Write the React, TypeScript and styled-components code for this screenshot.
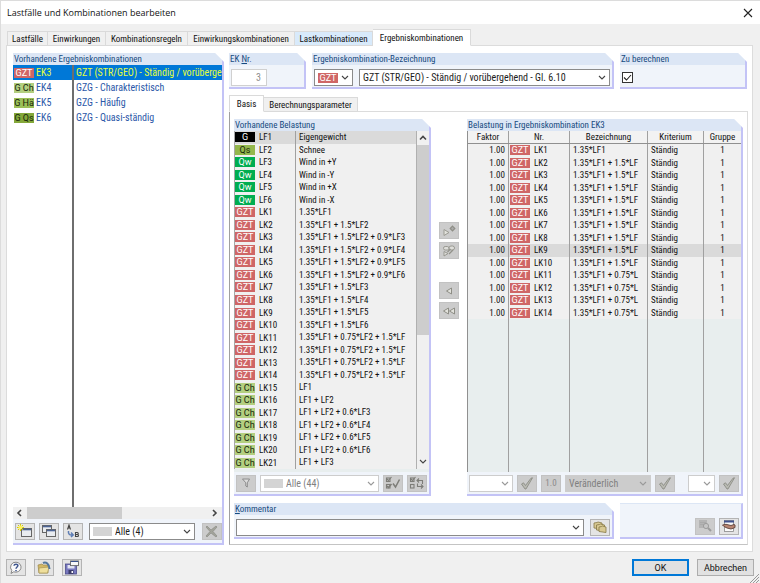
import React from "react";
import styled, { createGlobalStyle, css } from "styled-components";

const Global = createGlobalStyle`
  *, *::before, *::after { box-sizing: border-box; }
  body { margin: 0; background: #f0f0f0; color: #111; }
  body, button, input, select, table {
    font-family: "Roboto Condensed", "Open Sans", sans-serif;
    font-size: 9px;
    line-height: 12px;
  }
  button, input, select { margin: 0; padding: 0; color: inherit; border-radius: 0; }
  table { border-spacing: 0; }
  th, td { padding: 0; font-weight: 400; text-align: left; white-space: nowrap; overflow: hidden; }
  u { text-decoration: underline; text-underline-offset: 1px; }
`;

/* ---------- window frame ---------- */

const Dialog = styled.main`
  display: flex;
  flex-direction: column;
  min-height: 100vh;
  background: #f0f0f0;
  border: 1px solid #dcdcdc;
  border-right: 0;
  border-bottom: 0;
`;
const TitleBar = styled.header`
  display: flex;
  align-items: center;
  justify-content: space-between;
  height: 23px;
  padding: 0 6px;
  background: #fff;
`;
const Title = styled.h1`
  margin: 0;
  font: 400 9px/14px "Open Sans", sans-serif;
  color: #111;
`;
const CloseButton = styled.button`
  display: flex;
  width: 12px;
  height: 12px;
  align-items: center;
  justify-content: center;
  border: 0;
  background: none;
`;
const TabBar = styled.nav`
  display: flex;
  align-items: flex-end;
  position: relative;
  z-index: 1;
  padding: 5px 6px 0;
  margin-bottom: -1px;
`;
const Tab = styled.button<{ $w: number; $on?: boolean; $hot?: boolean }>`
  width: ${p => p.$w}px;
  height: 15px;
  border: 1px solid #dadada;
  border-left-width: 0;
  background: ${p => (p.$hot ? "#d8eafb" : "#f0f0f0")};
  white-space: nowrap;
  line-height: 12px;
  &:first-child { border-left-width: 1px; }
  ${p => p.$on && css`
    height: 17px;
    background: #fff;
    border-bottom-color: #fff;
    line-height: 12px;
  `}
`;
const Page = styled.section`
  flex: 1;
  display: flex;
  gap: 5px;
  margin: 0 7px 0 5px;
  padding: 7px 4px 6px 6px;
  background: #fff;
  border: 1px solid #dcdcdc;
`;
const Footer = styled.footer`
  display: flex;
  align-items: center;
  gap: 8px;
  height: 31px;
  padding: 0 6px 0 5px;
  position: relative;
`;
const Spacer = styled.div`
  flex: 1;
`;
const Grip = styled.svg`
  position: absolute;
  right: 1px;
  bottom: 0;
`;
const PushButton = styled.button<{ $primary?: boolean }>`
  width: 57px;
  height: 17px;
  font: 400 9px/12px Roboto, sans-serif;
  background: #e1e1e1;
  border: ${p => (p.$primary ? "2px solid #0078d7" : "1px solid #adadad")};
`;

/* ---------- groups ---------- */

const Group = styled.section<{ $w?: number }>`
  display: flex;
  flex-direction: column;
  min-width: 0;
  ${p => (p.$w ? `width: ${p.$w}px; flex: none;` : "flex: 1;")}
  background: #f0f4fa;
  border: solid #c3c3f6;
  border-width: 0 2px 2px 0;
  clip-path: polygon(0 0, calc(100% - 9px) 0, 100% 9px, 100% 100%, 0 100%);
`;
const GroupTitle = styled.h2`
  flex: none;
  margin: 0;
  height: 12px;
  padding-left: 1px;
  font: inherit;
  white-space: nowrap;
  color: #164a80;
  background: #dce6f5;
`;
const Field = styled.div`
  display: flex;
  align-items: center;
  gap: 6px;
  height: 22px;
  padding: 2px 2px 0;
`;
const Tools = styled.div<{ $h?: number }>`
  flex: none;
  display: flex;
  align-items: center;
  gap: 4px;
  height: ${p => p.$h ?? 22}px;
  padding: 0 2px;
`;
const PlainGroup = styled(Group)`
  clip-path: none;
  justify-content: flex-end;
  border-top: 1px solid #dce6f5;
`;

/* ---------- controls ---------- */

const ToolButton = styled.button<{ $solid?: boolean }>`
  flex: none;
  display: flex;
  align-items: center;
  justify-content: center;
  width: 20px;
  height: 17px;
  color: #8a8a8a;
  background: ${p => (p.$solid ? "#cccccc" : "#e4e4e4")};
  border: 1px solid ${p => (p.$solid ? "#c2c2c2" : "#b4b4b4")};
`;
const NumberBox = styled.input`
  width: 36px;
  height: 17px;
  padding: 0 5px;
  font-size: 10px;
  text-align: right;
  color: #8e8e8e;
  background: #fff;
  border: 1px solid #d0d0d0;
`;
const Combo = styled.div<{ $w?: number; $off?: boolean; $fill?: boolean }>`
  ${p => (p.$w ? `width: ${p.$w}px; flex: none;` : "flex: 1;")}
  display: flex;
  align-items: center;
  position: relative;
  min-width: 0;
  height: 17px;
  background: ${p => (p.$fill ? "#cccccc" : "#fff")};
  border: 1px solid ${p => (p.$off ? "#cdcdcd" : "#8b8b8b")};
  color: ${p => (p.$off ? "#808080" : "#1c1c1c")};
  > svg { position: absolute; right: 3px; top: 4px; pointer-events: none; }
`;
const Select = styled.select<{ $indent?: number }>`
  appearance: none;
  flex: 1;
  min-width: 0;
  height: 15px;
  padding: 0 14px 0 ${p => p.$indent ?? 3}px;
  border: 0;
  background: transparent;
  font-size: 10px;
  line-height: 15px;
  opacity: 1;
`;
const Swatch = styled.span`
  flex: none;
  width: 19px;
  height: 9px;
  margin-left: 3px;
  background: #d4d4d4;
`;
const Check = styled.input`
  appearance: none;
  margin: 0;
  width: 11px;
  height: 11px;
  border: 1px solid #333;
  background: #fff;
`;
const CheckLabel = styled.label`
  display: grid;
  > * { grid-area: 1 / 1; }
  > svg { pointer-events: none; z-index: 1; visibility: hidden; }
  > input:checked + svg { visibility: visible; }
`;
const tones = {
  gzt: ["#cf6666", "#ffffff"],
  gch: ["#b3cf80", "#16260a"],
  gha: ["#9cbf58", "#16260a"],
  gqs: ["#84a83a", "#16260a"],
  g: ["#000000", "#ffffff"],
  qs: ["#94b74c", "#16260a"],
  qw: ["#00ad50", "#ffffff"],
};
type Tone = keyof typeof tones;
const Badge = styled.span<{ $tone: Tone }>`
  flex: none;
  display: flex;
  align-items: center;
  justify-content: center;
  width: 20px;
  height: 10px;
  overflow: hidden;
  font: 400 9px/10px Roboto, sans-serif;
  white-space: nowrap;
  background: ${p => tones[p.$tone][0]};
  color: ${p => tones[p.$tone][1]};
`;
const TypeBadge = styled(Badge)`
  position: absolute;
  left: 3px;
  top: 3px;
  pointer-events: none;
`;

/* ---------- tables ---------- */

const Table = styled.table`
  flex: 1;
  display: flex;
  flex-direction: column;
  min-width: 0;
  background: #f0f0f0;
`;
const Tagged = styled.td`
  display: flex;
  align-items: center;
  gap: 4px;
`;

const ComboTable = styled(Table)`
  background: #fff;
  color: #2c58a8;
  font-size: 10px;
  tbody { flex: 1; display: flex; flex-direction: column; }
`;
const ComboRow = styled.tr<{ $on?: boolean; $fill?: boolean }>`
  display: grid;
  grid-template-columns: 59px 1fr;
  ${p => (p.$fill ? "flex: 1;" : "height: 15px;")}
  line-height: 15px;
  ${p => p.$on && "background: #0078d7; color: #e6ff3c;"}
  td { padding-left: 1px; }
  td + td { border-left: 2px solid #6e6e6e; padding-left: 2px; }
  ${Tagged} { gap: 2px; }
`;

const LoadTable = styled(Table)`
  border-left: 1px solid #a8a8a8;
  tbody { flex: 1; display: grid; grid-auto-rows: 1fr; }
`;
const LoadRow = styled.tr<{ $on?: boolean }>`
  display: grid;
  grid-template-columns: 60px 1fr;
  align-items: stretch;
  background: ${p => (p.$on ? "#dadada" : "transparent")};
  td + td { border-left: 1px solid #a0a0a0; padding-left: 3px; }
`;

const ResultTable = styled(Table)`
  border-left: 1px solid #909090;
  thead { flex: none; border-bottom: 1px solid #909090; background: #f2f2f2; }
  tbody { flex: none; display: grid; grid-auto-rows: 1fr; height: 175px; }
  tfoot { flex: 1; display: grid; background: #e8eeee; }
`;
const ResultRow = styled.tr<{ $on?: boolean }>`
  display: grid;
  grid-template-columns: 41px 61px 78px 56px 1fr;
  background: ${p => (p.$on ? "#dadada" : "transparent")};
  th { text-align: center; line-height: 12px; }
  th:not(:last-child), td:not(:last-child) { border-right: 1px solid #a0a0a0; }
  td { padding: 0 3px; }
  td:first-child { text-align: right; }
  td:last-child { text-align: center; }
  ${Tagged} { padding: 0 1px; }
`;

const ListBody = styled.div`
  flex: 1;
  display: flex;
  min-height: 0;
`;
const VScroll = styled.div`
  width: 13px;
  display: flex;
  flex-direction: column;
  align-items: center;
  justify-content: space-between;
  border-left: 1px solid #b0b0b0;
  background: #f0f0f0;
  svg { flex: none; margin: 3px 0; }
`;
const VThumb = styled.div`
  flex: 191;
  align-self: stretch;
  background: #cdcdcd;
`;
const VRest = styled.div`
  flex: 121;
`;
const HScroll = styled.div`
  display: flex;
  align-items: center;
  height: 12px;
  padding: 0 4px 0 3px;
  background: #f0f0f0;
`;
const HThumb = styled.div`
  flex: 96;
  height: 12px;
  margin-left: 3px;
  background: #cdcdcd;
`;
const HRest = styled.div`
  flex: 88;
`;
const Strip = styled.div`
  height: 3px;
  background: #e8eeee;
`;

/* ---------- right side layout ---------- */

const Main = styled.div`
  flex: 1;
  display: flex;
  flex-direction: column;
  min-width: 0;
`;
const Row = styled.div<{ $grow?: boolean; $pad?: boolean }>`
  display: flex;
  gap: 6px;
  ${p => p.$grow && "flex: 1; gap: 0;"}
  ${p => p.$pad && "padding-right: 1px;"}
`;
const SubTabs = styled.nav`
  display: flex;
  align-items: flex-end;
  position: relative;
  z-index: 1;
  margin: 6px 0 -1px;
`;
const SubPage = styled.section`
  flex: 1;
  display: flex;
  flex-direction: column;
  gap: 7px;
  padding: 7px 4px 5px 4px;
  border: 1px solid #dcdcdc;
  border-left-color: #a0a0a0;
  border-bottom-color: #c4c4c4;
`;
const Transfer = styled.div`
  display: flex;
  flex-direction: column;
  gap: 3px;
  padding: 103px 8px 0;
  ${ToolButton}:nth-child(3) { margin-top: 20px; }
`;

/* ---------- drawings ---------- */

const Chevron = ({ dir = "down", c = "#444" }: { dir?: "down" | "up" | "left" | "right"; c?: string }) => {
  const d = { down: "M1 2l3 3 3-3", up: "M1 5.500l3-3 3 3", left: "M5 1L2 4l3 3", right: "M3 1l3 3-3 3" }[dir];
  return <svg width="8" height="8" viewBox="0 0 8 8"><path d={d} fill="none" stroke={c} strokeWidth={dir === "down" ? 1.1 : 1.6} /></svg>;
};
const TickIcon = () => (
  <svg width="14" height="13" viewBox="0 0 14 13"><path d="M1.500 7l2-1.200L5.500 8.500 11 1.200l1.500-.4L6 12H5z" fill="#b9bab2" stroke="#85877f" strokeWidth=".8" /></svg>
);
const NewIcon = () => (
  <svg width="16" height="14" viewBox="0 0 16 14">
    <rect x="4.500" y="4.500" width="10" height="8" fill="#e9ecef" stroke="#666" /><path d="M5 5.500h9" stroke="#4d6596" strokeWidth="1.600" />
    <path d="M3.500 0v7M0 3.500h7M1 1l5 5M6 1L1 6" stroke="#d6cf00" strokeWidth="1" /><circle cx="3.500" cy="3.500" r="2" fill="#fff35a" />
  </svg>
);
const CopyIcon = () => (
  <svg width="16" height="14" viewBox="0 0 16 14">
    <rect x="1.500" y="1.500" width="9" height="7" fill="#e9ecef" stroke="#666" /><path d="M2 2.500h8" stroke="#4d6596" strokeWidth="1.600" />
    <rect x="5.500" y="5.500" width="9" height="7" fill="#e9ecef" stroke="#666" /><path d="M6 6.500h8" stroke="#4d6596" strokeWidth="1.600" />
  </svg>
);
const RenumberIcon = () => (
  <svg width="16" height="14" viewBox="0 0 16 14" fill="none">
    <path d="M2.500 5.500l1.500-4.500 1.500 4.500M3 4h2" stroke="#444" strokeWidth="1.100" />
    <path d="M3.500 7c-.5 3 1 4.500 4 4M6 8.500l2.200 2.500-2.200 2" stroke="#5d7db5" strokeWidth="1.500" />
    <path d="M10.500 8.500v4h2c1.300 0 1.300-2 0-2h-1.800 1.600c1.300 0 1.300-2 0-2z" stroke="#444" strokeWidth="1.100" />
  </svg>
);
const DeleteIcon = () => (
  <svg width="14" height="13" viewBox="0 0 14 13"><path d="M2 1l4 4 5-4 1 1-4 4.500 4 4.500-1 1-5-4-4 4-1-1L5 6.500 1 2z" fill="#a3a49b" stroke="#85867f" strokeWidth=".6" /></svg>
);
const HelpIcon = () => (
  <svg width="14" height="14" viewBox="0 0 14 14" fill="none">
    <path d="M7 1.200a5.300 5 0 1 1-2.300 9.600L2 12.500l.8-3A5 5 0 0 1 7 1.200z" fill="#fafafa" stroke="#888" />
    <path d="M5 4.800C5.200 2.600 9 2.700 8.900 4.800 8.800 6 7 6.200 7 7.800M7 9v1.300" stroke="#3f568f" strokeWidth="1.500" />
  </svg>
);
const OpenIcon = () => (
  <svg width="16" height="14" viewBox="0 0 16 14">
    <path d="M2 4l4-1 1 1h5v8H3z" fill="#d2b763" stroke="#9b8748" strokeWidth=".7" />
    <path d="M3 7l10-1-1.500 6H3z" fill="#efdf9c" stroke="#a99655" strokeWidth=".7" />
    <path d="M7 2C10 .5 13.500 3 13.500 8" fill="none" stroke="#54779c" strokeWidth="2" />
  </svg>
);
const SaveIcon = () => (
  <svg width="16" height="15" viewBox="0 0 16 15">
    <rect x="1.500" y="4" width="11" height="10" fill="#7777bd" stroke="#4d4d8b" strokeWidth=".8" /><rect x="3.500" y="5" width="7" height="3.500" fill="#e2e4f3" />
    <rect x="4.500" y="10" width="5" height="4" fill="#3d3d6b" /><rect x="7.500" y="11" width="1.500" height="2" fill="#fff" />
    <rect x="6.500" y="1" width="8" height="4.600" fill="#f8f8f8" stroke="#666" strokeWidth=".9" /><path d="M7 1.500h7" stroke="#39518c" strokeWidth="1" />
  </svg>
);
const FilterIcon = () => (
  <svg width="12" height="12" viewBox="0 0 12 12"><path d="M2.500 2h7L7.300 5.800V10L5.800 9V5.800z" fill="#dcdcdc" stroke="#858585" strokeWidth=".9" /></svg>
);
const CheckPair = ({ swap }: { swap?: boolean }) => (
  <svg width="16" height="14" viewBox="0 0 16 14" fill="none" stroke="#7d7d78" strokeWidth="1.100">
    <rect x="1.500" y="2" width="3.500" height="3.500" /><rect x="1.500" y="8.500" width="3.500" height="3.500" /><path d="M2 3l1.500 1.500L6.500 1" />
    {swap ? <path d="M8 4.500h5.500V8M10 2.500l-2 2 2 2M14 10.500H8.500V7.500M12 8.500l2 2-2 2" /> : <path d="M2 10l1.500 1.500L6.500 8M8 7.500l2.500 3.500L14.500 3.500" strokeWidth="1.500" />}
  </svg>
);
const AddIcon = () => (
  <svg width="14" height="12" viewBox="0 0 14 12"><path d="M2 4.500v6L7 7.500z" fill="#e2e2dc" stroke="#9a9a92" /><path d="M10.500 1.200l2.300 2.300-2.300 2.300-2.300-2.300z" fill="#aaa" stroke="#8e8e86" strokeWidth="1.200" /></svg>
);
const AddAllIcon = () => (
  <svg width="14" height="12" viewBox="0 0 14 12">
    <g fill="#dededa" stroke="#92928a" strokeWidth=".9"><rect x="1.500" y="1.500" width="5.500" height="3.500" rx="1.700" /><rect x="7" y="1" width="5.500" height="4" rx="2" /><path d="M2 6.500v4.500l4-2.500z" /></g>
    <path d="M5.500 7l3-3M7 9l4-4" stroke="#92928a" strokeWidth="1.200" />
  </svg>
);
const BackIcon = ({ twice }: { twice?: boolean }) => (
  <svg width="14" height="10" viewBox="0 0 14 10" fill="#e2e2dc" stroke="#8e8e86">
    {twice ? <><path d="M6.500 2v6L1.500 5z" /><path d="M12.500 2v6l-5-3z" /></> : <path d="M9.500 2v6l-5-3z" />}
  </svg>
);
const LibraryIcon = () => (
  <svg width="15" height="13" viewBox="0 0 15 13" fill="#d8c993" stroke="#857744" strokeWidth=".8">
    <path d="M1 2l3-.5 1-.5 4 1v6l-8-1z" /><path d="M3.500 4l3-.5 1-.5 4 1v6l-8-1z" /><path d="M6 6l2.500-.5 1-.5 3.500 1v5.500L6 10.500z" />
  </svg>
);
const InspectIcon = () => (
  <svg width="16" height="14" viewBox="0 0 16 14"><rect x="2" y="1" width="8" height="8" fill="#b4b4b4" /><path d="M3 3.500h6M3 5.500h6" stroke="#a2a2a2" strokeWidth=".6" /><circle cx="9" cy="7" r="2.600" fill="#c6c6c6" stroke="#9c9c9c" /><path d="M11 9l3 3" stroke="#9c9c9c" strokeWidth="2" /></svg>
);
const DetailsIcon = () => (
  <svg width="16" height="14" viewBox="0 0 16 14"><rect x="3.500" y="1.500" width="9" height="11" fill="#fafafa" stroke="#888" strokeWidth=".8" /><path d="M3 2.500h10" stroke="#40518d" strokeWidth="2" /><path d="M1.500 6l3.500-.7 5 1.200 3-1 1 .5v2.500L10 10 6 9 3 7.500z" fill="#b98673" stroke="#5b4038" strokeWidth=".9" /></svg>
);

/* ---------- data ---------- */

const combos: [Tone, string, string, string][] = [
  ["gzt", "GZT", "EK3", "GZT (STR/GEO) - Ständig / vorübergehend - Gl. 6.10"],
  ["gch", "G Ch", "EK4", "GZG - Charakteristisch"],
  ["gha", "G Hä", "EK5", "GZG - Häufig"],
  ["gqs", "G Qs", "EK6", "GZG - Quasi-ständig"],
];
const cases: [Tone, string, string, string][] = [
  ["g", "G", "LF1", "Eigengewicht"],
  ["qs", "Qs", "LF2", "Schnee"],
  ["qw", "Qw", "LF3", "Wind in +Y"],
  ["qw", "Qw", "LF4", "Wind in -Y"],
  ["qw", "Qw", "LF5", "Wind in +X"],
  ["qw", "Qw", "LF6", "Wind in -X"],
];
const strength = [
  "1.35*LF1", "1.35*LF1 + 1.5*LF2",
  ...[3, 4, 5, 6].map(n => `1.35*LF1 + 1.5*LF2 + 0.9*LF${n}`),
  ...[3, 4, 5, 6].map(n => `1.35*LF1 + 1.5*LF${n}`),
  ...Array(4).fill("1.35*LF1 + 0.75*LF2 + 1.5*LF"),
];
// LK11 to LK14 are followed by the serviceability combinations from LK15 on.
const service = ["LF1", "LF1 + LF2", ...[3, 4, 5, 6].map(n => `LF1 + LF2 + 0.6*LF${n}`), "LF1 + LF3"];
const loads = [
  ...cases,
  ...strength.map((t, i): [Tone, string, string, string] => ["gzt", "GZT", `LK${i + 1}`, t]),
  ...service.map((t, i): [Tone, string, string, string] => ["gch", "G Ch", `LK${i + 15}`, t]),
];
const results = strength.map((_, i) => ({
  nr: `LK${i + 1}`,
  text: i === 0 ? "1.35*LF1" : i < 10 ? "1.35*LF1 + 1.5*LF" : "1.35*LF1 + 0.75*L",
}));

export default function App() {
  return (
    <>
      <Global />
      <Dialog>
        <TitleBar>
          <Title>Lastfälle und Kombinationen bearbeiten</Title>
          <CloseButton aria-label="Schließen">
            <svg width="10" height="10" viewBox="0 0 10 10"><path d="M1 1l8 8M9 1L1 9" stroke="#222" strokeWidth="1.100" /></svg>
          </CloseButton>
        </TitleBar>
        <TabBar>
          <Tab $w={41}>Lastfälle</Tab>
          <Tab $w={58}>Einwirkungen</Tab>
          <Tab $w={82}>Kombinationsregeln</Tab>
          <Tab $w={107}>Einwirkungskombinationen</Tab>
          <Tab $w={78} $hot>Lastkombinationen</Tab>
          <Tab $w={98} $on>Ergebniskombinationen</Tab>
        </TabBar>
        <Page>
          <Group $w={211}>
            <GroupTitle>Vorhandene Ergebniskombinationen</GroupTitle>
            <ListBody>
              <ComboTable>
                <tbody>
                  {combos.map(([tone, tag, nr, text], i) => (
                    <ComboRow key={nr} $on={i === 0}>
                      <Tagged><Badge $tone={tone}>{tag}</Badge>{nr}</Tagged>
                      <td>{text}</td>
                    </ComboRow>
                  ))}
                  <ComboRow $fill><td /><td /></ComboRow>
                </tbody>
              </ComboTable>
            </ListBody>
            <HScroll>
              <Chevron dir="left" /><HThumb /><HRest /><Chevron dir="right" />
            </HScroll>
            <Tools $h={24}>
              <ToolButton aria-label="Neu"><NewIcon /></ToolButton>
              <ToolButton aria-label="Kopieren"><CopyIcon /></ToolButton>
              <ToolButton aria-label="Umnummerieren"><RenumberIcon /></ToolButton>
              <MarginCombo $w={106}>
                <Swatch />
                <Select aria-label="Filter"><option>Alle (4)</option></Select>
                <Chevron />
              </MarginCombo>
              <ToolButton $solid aria-label="Löschen"><DeleteIcon /></ToolButton>
            </Tools>
          </Group>
          <Main>
            <Row $pad>
              <Group $w={77}>
                <GroupTitle as="label" htmlFor="nr">EK <u>N</u>r.</GroupTitle>
                <Field><NumberBox id="nr" defaultValue="3" disabled /></Field>
              </Group>
              <Group>
                <GroupTitle as="label" htmlFor="name">Ergebniskombination-Bezeichnung</GroupTitle>
                <Field>
                  <Combo $w={39}>
                    <Select aria-label="Bemessungssituation" $indent={0}><option aria-label="GZT" /></Select>
                    <TypeBadge $tone="gzt">GZT</TypeBadge>
                    <Chevron />
                  </Combo>
                  <Combo>
                    <Select id="name"><option>GZT (STR/GEO) - Ständig / vorübergehend - Gl. 6.10</option></Select>
                    <Chevron />
                  </Combo>
                </Field>
              </Group>
              <Group $w={127}>
                <GroupTitle as="label" htmlFor="calc">Zu berechnen</GroupTitle>
                <Field>
                  <CheckLabel>
                    <Check id="calc" type="checkbox" defaultChecked />
                    <svg width="11" height="11" viewBox="0 0 11 11"><path d="M2 5.500l2.500 2.500L9 3" fill="none" stroke="#222" strokeWidth="1.100" /></svg>
                  </CheckLabel>
                </Field>
              </Group>
            </Row>
            <SubTabs>
              <Tab $w={35} $on>Basis</Tab>
              <Tab $w={94}>Berechnungsparameter</Tab>
            </SubTabs>
            <SubPage>
              <Row $grow>
                <Group $w={197}>
                  <GroupTitle>Vorhandene Belastung</GroupTitle>
                  <ListBody>
                    <LoadTable>
                      <tbody>
                        {loads.map(([tone, tag, nr, text], i) => (
                          <LoadRow key={nr} $on={i === 0}>
                            <Tagged><Badge $tone={tone}>{tag}</Badge>{nr}</Tagged>
                            <td>{text}</td>
                          </LoadRow>
                        ))}
                      </tbody>
                    </LoadTable>
                    <VScroll><Chevron dir="up" /><VThumb /><VRest /><Chevron /></VScroll>
                  </ListBody>
                  <Strip />
                  <Tools>
                    <ToolButton $solid aria-label="Filtern"><FilterIcon /></ToolButton>
                    <Combo $off>
                      <Swatch />
                      <Select aria-label="Filter Belastung" disabled><option>Alle (44)</option></Select>
                      <Chevron c="#999" />
                    </Combo>
                    <ToolButton $solid aria-label="Alle wählen"><CheckPair /></ToolButton>
                    <ToolButton $solid aria-label="Auswahl umkehren"><CheckPair swap /></ToolButton>
                  </Tools>
                </Group>
                <Transfer>
                  <ToolButton $solid aria-label="Hinzufügen"><AddIcon /></ToolButton>
                  <ToolButton $solid aria-label="Alle hinzufügen"><AddAllIcon /></ToolButton>
                  <ToolButton $solid aria-label="Entfernen"><BackIcon /></ToolButton>
                  <ToolButton $solid aria-label="Alle entfernen"><BackIcon twice /></ToolButton>
                </Transfer>
                <Group>
                  <GroupTitle>Belastung in Ergebniskombination EK3</GroupTitle>
                  <ListBody>
                    <ResultTable>
                      <thead>
                        <ResultRow>
                          <th>Faktor</th><th>Nr.</th><th>Bezeichnung</th><th>Kriterium</th><th>Gruppe</th>
                        </ResultRow>
                      </thead>
                      <tbody>
                        {results.map((r, i) => (
                          <ResultRow key={r.nr} $on={i === 8}>
                            <td>1.00</td>
                            <Tagged><Badge $tone="gzt">GZT</Badge>{r.nr}</Tagged>
                            <td>{r.text}</td>
                            <td>Ständig</td>
                            <td>1</td>
                          </ResultRow>
                        ))}
                      </tbody>
                      <tfoot><ResultRow><td /><td /><td /><td /><td /></ResultRow></tfoot>
                    </ResultTable>
                  </ListBody>
                  <Tools>
                    <Combo $off $w={44}><Select aria-label="Faktor" disabled><option /></Select><Chevron c="#999" /></Combo>
                    <ToolButton $solid aria-label="Faktor setzen"><TickIcon /></ToolButton>
                    <ToolButton $solid>1.0</ToolButton>
                    <Combo $off $fill $w={86}><Select aria-label="Kriterium" disabled><option>Veränderlich</option></Select><Chevron c="#999" /></Combo>
                    <ToolButton $solid aria-label="Kriterium setzen"><TickIcon /></ToolButton>
                    <Spacer />
                    <Combo $off $w={27}><Select aria-label="Gruppe" disabled><option /></Select><Chevron c="#999" /></Combo>
                    <ToolButton $solid aria-label="Gruppe setzen"><TickIcon /></ToolButton>
                  </Tools>
                </Group>
              </Row>
              <Row>
                <Group>
                  <GroupTitle as="label" htmlFor="note"><u>K</u>ommentar</GroupTitle>
                  <Field>
                    <Combo><Select id="note"><option /></Select><Chevron /></Combo>
                    <ToolButton aria-label="Kommentare"><LibraryIcon /></ToolButton>
                  </Field>
                </Group>
                <PlainGroup $w={123}>
                  <Tools>
                    <Spacer />
                    <ToolButton $solid aria-label="Prüfen"><InspectIcon /></ToolButton>
                    <ToolButton aria-label="Details"><DetailsIcon /></ToolButton>
                  </Tools>
                </PlainGroup>
              </Row>
            </SubPage>
          </Main>
        </Page>
        <Footer>
          <ToolButton aria-label="Hilfe"><HelpIcon /></ToolButton>
          <ToolButton aria-label="Öffnen"><OpenIcon /></ToolButton>
          <ToolButton aria-label="Speichern"><SaveIcon /></ToolButton>
          <Spacer />
          <PushButton $primary>OK</PushButton>
          <PushButton>Abbrechen</PushButton>
          <Grip width="9" height="9" viewBox="0 0 9 9"><path d="M0 9l9-9M3 9l6-6M6 9l3-3" stroke="#999" /></Grip>
        </Footer>
      </Dialog>
    </>
  );
}

const MarginCombo = styled(Combo)`
  margin: 0 3px 0 2px;
`;
